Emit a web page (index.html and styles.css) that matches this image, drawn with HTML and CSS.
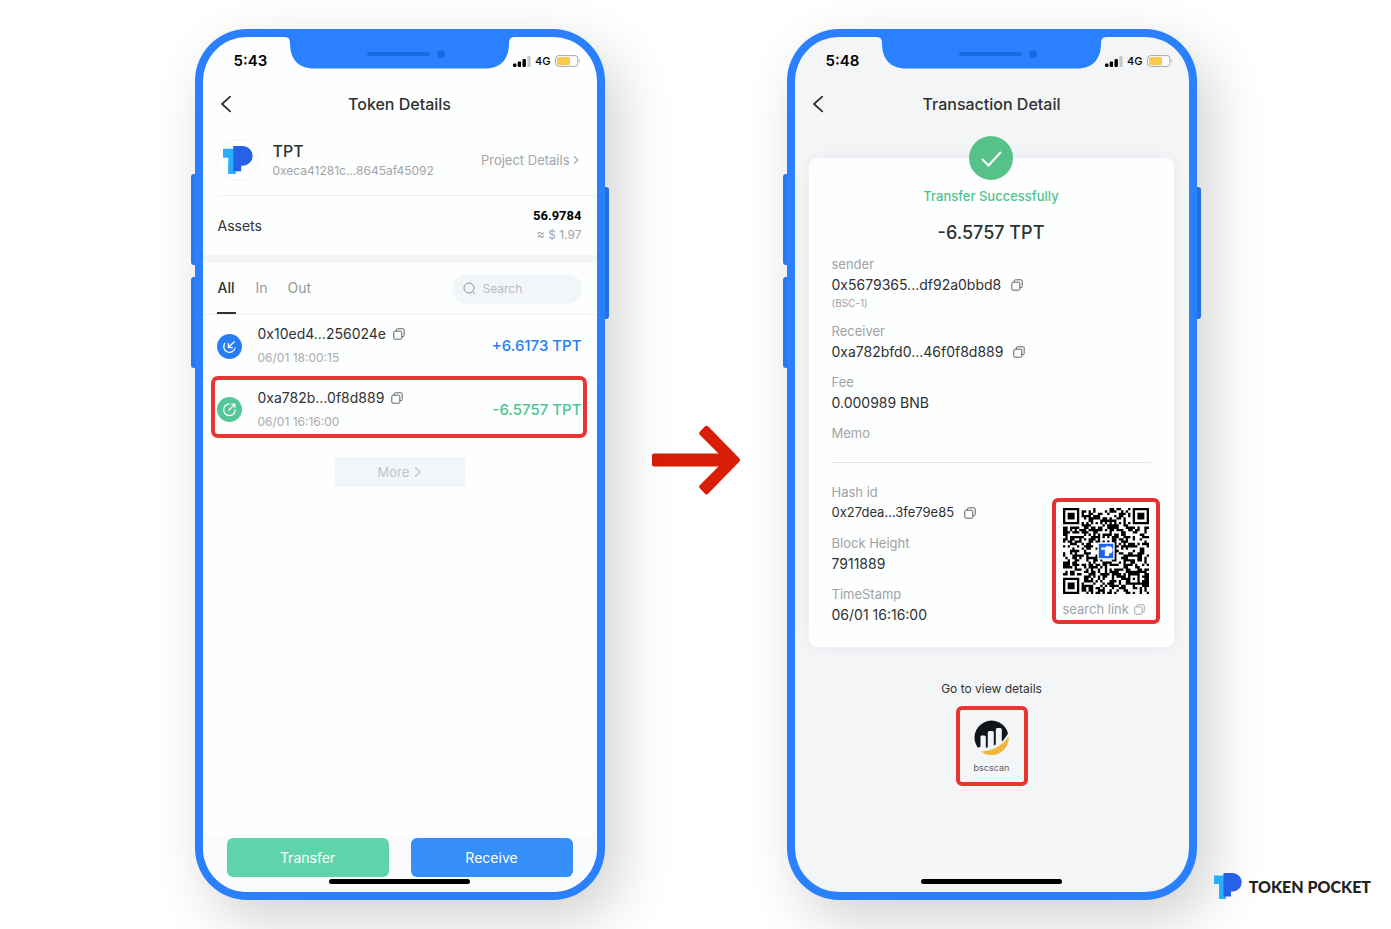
FILE: index.html
```html
<!DOCTYPE html>
<html lang="en">
<head>
<meta charset="utf-8">
<meta name="viewport" content="width=device-width, initial-scale=1">
<title>Token Pocket</title>
<link rel="stylesheet" href="styles.css">
</head>
<body>
<svg class="defs" aria-hidden="true">
  <symbol id="copy" viewBox="0 0 12 12"><g fill="none" stroke="currentColor" stroke-width="1"><rect x=".8" y="3.2" width="8" height="8" rx="1"/><path d="M3.300 3V1.800Q3.300.8 4.300.8H10.200Q11.200.8 11.200 1.800V7.600Q11.200 8.600 10.200 8.600H9"/></g></symbol>
  <symbol id="back" viewBox="0 0 12 18"><path d="M10.2 1.6 2 9l8.2 7.4" fill="none" stroke="currentColor" stroke-width="1.8" stroke-linecap="round" stroke-linejoin="round"/></symbol>
  <symbol id="next" viewBox="0 0 7 12"><path d="M1 1.5 5.8 6 1 10.500" fill="none" stroke="currentColor" stroke-width="1.3"/></symbol>
  <symbol id="tp" viewBox="0 0 28 27"><path d="M0 2.500H10V26H5V11H0Z" fill="#29aefd"/><path d="M5 16h5v7h2v3H5Z" fill="#29aefd"/><path d="M9.500 0H18.500A9.200 9.200 0 0 1 18.500 18.400H17V23.500H9.500Z" fill="#2761e7"/></symbol>
  <symbol id="signal" viewBox="0 0 18 11"><rect y="7.500" width="3.400" height="3.500" rx="1"/><rect x="4.700" y="5.500" width="3.400" height="5.500" rx="1"/><rect x="9.500" y="3" width="3.400" height="8" rx="1"/><rect x="14.300" width="3.400" height="11" rx="1" fill="#c8c9cb"/></symbol>
  <symbol id="battery" viewBox="0 0 26 12"><rect x=".6" y=".6" width="22.300" height="10.800" rx="3" fill="#fff" stroke="#a5a6a8"/><rect x="2" y="2" width="13" height="8" rx="1.500" fill="#f8ca45"/><path d="M24 4q1.700 2 0 4Z" fill="#a5a6a8"/></symbol>
  <symbol id="notch" viewBox="0 0 230 32"><path d="M0 0Q5 0 5 6C5 22 13 31.500 29 31.500H200C216 31.500 224 22 224 6Q224 0 229 0Z" fill="#2a80fe"/><rect x="82" y="15" width="63" height="4" rx="2" fill="#1969df"/><circle cx="156" cy="17" r="4" fill="#1969df"/></symbol>
</svg>

<main class="stage">
  <section class="phone" aria-label="Token Details">
    <i class="key key-up"></i><i class="key key-down"></i><i class="key key-power"></i>
    <div class="screen">
      <svg class="notch" aria-hidden="true"><use href="#notch"/></svg>
      <div class="status"><b>5:43</b><span class="indicators"><svg class="signal"><use href="#signal"/></svg>4G<svg class="battery"><use href="#battery"/></svg></span></div>
      <header class="nav"><button class="back" aria-label="Back"><svg><use href="#back"/></svg></button><h1>Token Details</h1></header>

      <div class="token">
        <span class="token-logo"><svg><use href="#tp"/></svg></span>
        <div class="token-name"><h2>TPT</h2><p>0xeca41281c...8645af45092</p></div>
        <a class="project" href="#project">Project Details<svg><use href="#next"/></svg></a>
      </div>
      <div class="assets"><span>Assets</span><div class="balance"><strong>56.9784</strong><span>≈ $ 1.97</span></div></div>
      <div class="filters">
        <nav class="tabs"><button class="tab active">All</button><button class="tab">In</button><button class="tab">Out</button></nav>
        <label class="search"><svg viewBox="0 0 13 13"><circle cx="6" cy="6" r="5" /><path d="m9.700 9.700 2.600 2.600"/></svg><input type="text" placeholder="Search" aria-label="Search"></label>
      </div>
      <ul class="history">
        <li class="tx in">
          <svg class="tx-icon" viewBox="0 0 25 25"><circle class="disc" cx="12.500" cy="12.500" r="12.500"/><path d="M8 8.800A5.800 5.800 0 1 0 18.200 13.500M17.500 7.500l-5.800 5.800M11.400 9.300v4.300h4.300"/></svg>
          <div class="tx-text"><p class="address">0x10ed4...256024e<button class="copy" aria-label="Copy"><svg><use href="#copy"/></svg></button></p><time>06/01 18:00:15</time></div>
          <span class="amount">+6.6173 TPT</span>
        </li>
        <li class="tx out marked">
          <svg class="tx-icon" viewBox="0 0 25 25"><circle class="disc" cx="12.500" cy="12.500" r="12.500"/><path d="M12.500 7A5.800 5.800 0 1 0 18.200 12.500M11.500 13.500l6-6M14.300 7.200h3.500v3.500"/></svg>
          <div class="tx-text"><p class="address">0xa782b...0f8d889<button class="copy" aria-label="Copy"><svg><use href="#copy"/></svg></button></p><time>06/01 16:16:00</time></div>
          <span class="amount">-6.5757 TPT</span>
        </li>
      </ul>
      <button class="more">More<svg><use href="#next"/></svg></button>
      <footer class="actions"><button class="action transfer">Transfer</button><button class="action receive">Receive</button></footer>
      <i class="home"></i>
    </div>
  </section>

  <div class="step"><svg viewBox="0 0 88 70" aria-hidden="true"><path d="M2 28.500H66.500L47.500 9.500Q46.500 8 48 6.500L53 1.300Q54.500 0 56 1.300L87.500 33.500Q88.500 35 87.500 36.500L56 68.800Q54.500 70 53 68.800L48 63.500Q46.500 62 47.500 60.500L66.500 41.500H2Q0 41.500 0 39.500V30.500Q0 28.500 2 28.500Z" fill="#d81e06"/></svg></div>

  <section class="phone" aria-label="Transaction Detail">
    <i class="key key-up"></i><i class="key key-down"></i><i class="key key-power"></i>
    <div class="screen grey">
      <svg class="notch" aria-hidden="true"><use href="#notch"/></svg>
      <div class="status"><b>5:48</b><span class="indicators"><svg class="signal"><use href="#signal"/></svg>4G<svg class="battery"><use href="#battery"/></svg></span></div>
      <header class="nav"><button class="back" aria-label="Back"><svg><use href="#back"/></svg></button><h1>Transaction Detail</h1></header>

      <article class="card">
        <svg class="check" viewBox="0 0 44 44" aria-hidden="true"><circle cx="22" cy="22" r="22" fill="#56c289"/><path d="m13 23 6.500 6.500L32 16" fill="none" stroke="#fff" stroke-width="2"/></svg>
        <p class="result">Transfer Successfully</p>
        <p class="total">-6.5757 TPT</p>
        <dl class="facts">
          <div><dt>sender</dt><dd>0x5679365...df92a0bbd8<button class="copy" aria-label="Copy"><svg><use href="#copy"/></svg></button></dd><dd class="note">(BSC-1)</dd></div>
          <div><dt>Receiver</dt><dd>0xa782bfd0...46f0f8d889<button class="copy" aria-label="Copy"><svg><use href="#copy"/></svg></button></dd></div>
          <div><dt>Fee</dt><dd>0.000989 BNB</dd></div>
          <div><dt>Memo</dt></div>
        </dl>
        <div class="chain">
          <dl class="facts">
            <div><dt>Hash id</dt><dd class="hash">0x27dea...3fe79e85<button class="copy" aria-label="Copy"><svg><use href="#copy"/></svg></button></dd></div>
            <div><dt>Block Height</dt><dd>7911889</dd></div>
            <div><dt>TimeStamp</dt><dd>06/01 16:16:00</dd></div>
          </dl>
          <div class="qr-box">
            <svg class="qr" viewBox="0 0 37 37" role="img" aria-label="QR code"><path id="modules" fill="#000"/><rect x="14.800" y="14.800" width="7.400" height="7.400" fill="#fff"/><rect x="15.400" y="15.400" width="6.200" height="6.200" fill="#1f62ee"/><path d="M16.400 17h2v-.5h1.400a1.500 1.500 0 0 1 0 3.100v1h-1.800v-2.600h-1.600Z" fill="#fff"/></svg>
            <button class="link">search link<svg><use href="#copy"/></svg></button>
          </div>
        </div>
      </article>
      <p class="hint">Go to view details</p>
      <a class="explorer" href="#bscscan">
        <svg viewBox="0 0 35 35" aria-hidden="true"><path d="M3.700 27.500A17 17 0 1 1 34 13.500C31 18.500 29 20.800 27.800 21.600V9.500q0-1.500-1.500-1.500h-3q-1.500 0-1.500 1.500V24.500l-2 1V12.500q0-1.500-1.500-1.500h-3q-1.500 0-1.500 1.500V27.200l-2 .5V17q0-1.500-1.500-1.500h-3Q6.500 15.500 6.500 17v9.500Q6.500 27.500 3.700 27.500Z" fill="#12161c"/><path d="M6.800 31.500C18 31 28 26 34.700 16.500A17.300 17.300 0 0 1 6.800 31.500Z" fill="#f0b93b"/></svg>
        <span>bscscan</span>
      </a>
      <i class="home"></i>
    </div>
  </section>
</main>
<div class="brand"><svg aria-hidden="true"><use href="#tp"/></svg>TOKEN POCKET</div>
<script src="qr.js"></script>
</body>
</html>
```
FILE: styles.css
```css
* { box-sizing: border-box; }
body { margin: 0; background: #fff; color: #303133; font: 14px/20px Inter, "Liberation Sans", sans-serif; overflow-x: hidden; }
h1, h2, p, dl, dd, ul { margin: 0; padding: 0; }
button, input { font: inherit; color: inherit; border: 0; padding: 0; background: none; }
a { color: inherit; text-decoration: none; }
svg { display: block; }
.defs { position: absolute; width: 0; height: 0; }

.stage { display: flex; justify-content: center; min-height: 100vh; padding: 29px 0; }
.phone { position: relative; display: flex; flex: 0 1 410px; background: #2a80fe; border-radius: 52px; padding: 8px; box-shadow: 14px 20px 56px rgba(0, 0, 0, .18); }
.screen { position: relative; display: flex; flex: 1; flex-direction: column; min-width: 0; overflow: hidden; background: #fdfefe; border-radius: 44px; }
.screen.grey { background: #f4f5f7; }
.key { position: absolute; width: 4px; height: 91px; left: -4px; background: #2878f4; border-radius: 3px 0 0 3px; }
.key-up { top: 145px; }
.key-down { top: 248px; }
.key-power { top: 158px; left: auto; right: -4px; height: 132px; background: #226fe6; border-radius: 0 3px 3px 0; }
.notch { position: absolute; top: 0; left: 50%; width: 230px; height: 32px; margin-left: -115px; }
.home { position: absolute; bottom: 8px; left: 50%; width: 141px; height: 5px; margin-left: -71px; border-radius: 3px; background: #000; }

.status { display: flex; justify-content: space-between; align-items: center; height: 48px; padding: 0 16px 0 31px; color: #000; }
.status b { font-size: 15px; font-weight: 600; }
.indicators { display: flex; align-items: center; gap: 4px; font-size: 11px; font-weight: 500; }
.signal { width: 18px; height: 11px; }
.battery { width: 26px; height: 12px; }
.nav { display: grid; grid-template-columns: 44px 1fr 44px; align-items: center; height: 38px; }
.nav h1 { font-size: 16px; font-weight: 500; text-align: center; }
.back { justify-self: start; padding-left: 17px; }
.back svg { width: 12px; height: 18px; }

.token { display: flex; align-items: center; height: 73px; margin-left: 14px; padding: 2px 18px 0 0; border-bottom: 1px solid #f0f1f3; }
.token-logo { display: grid; place-items: center; width: 42px; height: 42px; margin-right: 14px; border: 1px solid #f1f3f4; border-radius: 50%; }
.token-logo svg { width: 30px; height: 29px; }
.token-name { flex: 1; padding-top: 2px; }
.token-name h2 { font-size: 16px; font-weight: 500; }
.token-name p { font-size: 12px; color: #a2a4a8; }
.project { display: flex; align-items: center; gap: 3px; font-size: 13px; color: #a2a4a8; }
.project svg { width: 6px; height: 10px; }
.assets { display: flex; align-items: center; justify-content: space-between; height: 67px; padding: 0 15px; border-bottom: 8px solid #f4f5f7; }
.balance { display: grid; justify-items: end; }
.balance strong { color: #000; font: 700 13px/18px Roboto, "Liberation Sans", sans-serif; }
.balance span { font-size: 12px; color: #a2a4a8; }
.filters { display: flex; align-items: center; justify-content: space-between; height: 52px; padding: 0 15px 0 14px; border-bottom: 1px solid #f0f2f3; }
.tabs { display: flex; align-self: stretch; gap: 20px; }
.tab { color: #96989c; border-bottom: 2px solid transparent; }
.tab.active { min-width: 19px; color: #303133; font-weight: 500; border-color: #303133; }
.search { display: flex; align-items: center; gap: 7px; width: 130px; height: 30px; padding: 0 11px; border-radius: 15px; background: #f3f6f8; }
.search svg { flex: none; width: 13px; height: 13px; fill: none; stroke: #8e9196; }
.search input { width: 100%; min-width: 0; font-size: 12px; outline: 0; }
.search input::placeholder { color: #b8bbc0; opacity: 1; }

.history { list-style: none; }
.tx { position: relative; display: flex; align-items: center; height: 62px; padding: 0 15px 0 14px; }
.tx + .tx { height: 64px; border-top: 1px solid #f0f2f3; }
.tx-icon { width: 25px; height: 25px; margin-right: 16px; fill: none; stroke: #fff; stroke-width: 1.3; }
.disc { stroke: none; }
.in .disc { fill: #277df3; }
.out .disc { fill: #55c59a; }
.tx-text { flex: 1; }
.address { display: flex; align-items: center; height: 24px; }
.copy { margin-left: 7px; color: #606266; }
.copy svg { width: 12px; height: 12px; }
.tx time { display: block; font-size: 12px; line-height: 24px; color: #a9abaf; }
.amount { font-size: 15px; font-weight: 500; }
.in .amount { color: #277df3; }
.out .amount { color: #4fc495; }
.marked::after { content: ""; position: absolute; inset: -2px 10px 3px 8px; border: 4px solid #e93632; border-radius: 7px; pointer-events: none; }
.more { display: flex; align-items: center; justify-content: center; align-self: center; gap: 5px; width: 130px; height: 30px; margin-top: 16px; border-radius: 3px; background: #f3f6f8; color: #bfc3c8; font-size: 13px; }
.more svg { width: 7px; height: 12px; }
.actions { display: grid; grid-template-columns: 1fr 1fr; gap: 22px; margin-top: auto; padding: 4px 24px 15px; background: #fafbfd; }
.action { height: 39px; border-radius: 6px; color: #fff; }
.transfer { background: #5fd4aa; }
.receive { background: #368ef8; }

.step { display: grid; place-items: center; flex: 0 1 182px; padding-bottom: 10px; }
.step svg { width: 88px; height: 70px; }

.card { position: relative; margin: 35px 15px 0 14px; padding: 28px 23px 22px; background: #fdfefe; border-radius: 8px; box-shadow: 0 0 16px rgba(40, 50, 80, .06); }
.check { position: absolute; top: -22px; left: 50%; width: 44px; height: 44px; margin-left: -22px; }
.result { font-size: 13px; font-weight: 500; text-align: center; color: #50c38d; }
.total { margin: 13px 0 7px; font-size: 18px; font-weight: 500; line-height: 28px; text-align: center; }
.facts { display: grid; gap: 10px; }
.facts dt { font-size: 13px; color: #a0a2a6; }
.facts dd { display: flex; align-items: center; line-height: 21px; }
.facts .hash { font-size: 13px; }
.facts .copy { margin-left: 10px; }
.facts .note { font-size: 10px; line-height: 16px; color: #a0a2a6; }
.chain { display: flex; align-items: flex-start; justify-content: space-between; margin-top: 19px; padding-top: 19px; border-top: 1px solid #e5e6e8; }
.qr-box { width: 108px; margin: 16px -9px -21px 0; padding: 6px 6px 1px 7px; border: 4px solid #e23330; border-radius: 6px; }
.qr { width: 86px; height: 86px; }
.link { display: flex; align-items: center; gap: 5px; height: 20px; margin-top: 5px; font-size: 13px; white-space: nowrap; color: #a0a2a6; }
.link svg { width: 11px; height: 11px; }
.hint { margin-top: 34px; font-size: 12px; line-height: 16px; text-align: center; }
.explorer { display: flex; flex-direction: column; align-items: center; align-self: center; gap: 5px; width: 72px; margin-top: 9px; padding: 10px 0 6px; border: 4px solid #e93632; border-radius: 6px; font-size: 9px; line-height: 16px; color: #606266; }
.explorer svg { width: 35px; height: 35px; }

.brand { position: absolute; right: 20px; bottom: 29px; display: flex; align-items: center; gap: 7px; color: #222; font: 900 16px/27px Lato, "Open Sans", sans-serif; white-space: nowrap; }
.brand svg { width: 28px; height: 27px; }
```
FILE: qr.js
```javascript
const SIZE = 37;
let seed = 7911889;

function random() {
  seed = (seed * 1103515245 + 12345) % 2147483648;
  return seed / 2147483648;
}

function ring(x, y, cx, cy, reach) {
  const d = Math.max(Math.abs(x - cx), Math.abs(y - cy));
  return d > reach ? null : d;
}

function isDark(x, y) {
  const noise = random() < 0.52;
  for (const [cx, cy] of [[3, 3], [SIZE - 4, 3], [3, SIZE - 4]]) {
    const d = ring(x, y, cx, cy, 4);
    if (d !== null) return d === 3 || d < 2;
  }
  const align = ring(x, y, SIZE - 7, SIZE - 7, 2);
  if (align !== null) return align !== 1;
  if (x === 6 || y === 6) return (x + y) % 2 === 0;
  return noise;
}

let path = "";
for (let y = 0; y < SIZE; y++) {
  for (let x = 0; x < SIZE; x++) {
    if (isDark(x, y)) path += `M${x} ${y}h1v1h-1z`;
  }
}
document.getElementById("modules").setAttribute("d", path);
```
